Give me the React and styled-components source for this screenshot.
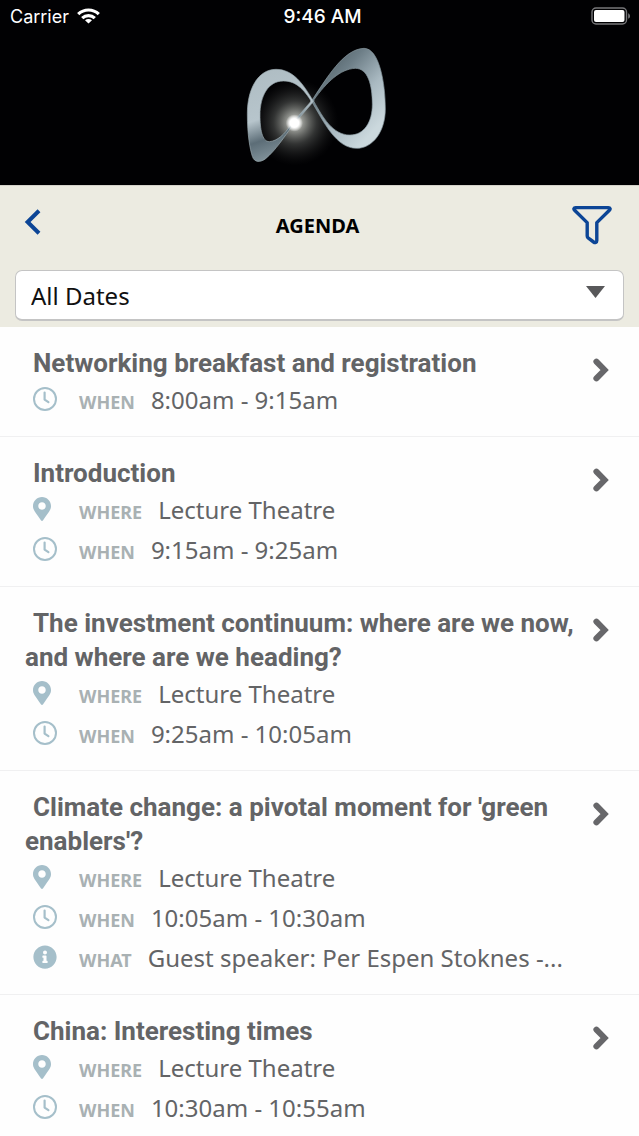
import React from 'react';
import styled, { createGlobalStyle } from 'styled-components';
import { FaMapMarkerAlt, FaInfoCircle } from 'react-icons/fa';

const GlobalStyle = createGlobalStyle`
  * {
    box-sizing: border-box;
  }
  body {
    margin: 0;
    background-color: #fefefe;
    font-family: 'Noto Sans', 'Open Sans', sans-serif;
    color: #636466;
  }
  ::-webkit-scrollbar {
    display: none;
  }
`
const Banner = styled.header`
  background-color: #010103;
`
const StatusBar = styled.div`
  display: grid;
  grid-template-columns: 1fr auto 1fr;
  align-items: center;
  height: 32px;
  padding: 0 8px 0 10px;
  font-family: Inter, sans-serif;
  font-size: 18px;
  color: #ffffff;
`
const Carrier = styled.div`
  display: flex;
  align-items: center;
  gap: 8px;
`
const Time = styled.div`
  padding-left: 4px;
  font-size: 19px;
  font-weight: 500;
`
const Battery = styled.svg`
  justify-self: end;
`
const LogoCont = styled.div`
  display: flex;
  justify-content: center;
  align-items: flex-end;
  height: 153px;
`
const Toolbar = styled.section`
  padding: 0 15px 6px;
  background-color: #ecebe1;
  border-top: 1px solid #d4d2ca;
`
const TitleBar = styled.div`
  display: grid;
  grid-template-columns: 1fr auto 1fr;
  align-items: center;
  height: 84px;
  padding: 0 12px 6px 8px;
`
const IconButton = styled.button`
  display: flex;
  justify-self: ${props => props.$right ? 'end' : 'start'};
  padding: ${props => props.$right ? '0' : '0 0 6px'};
  border: 0;
  background: none;
  color: #0c4596;
  cursor: pointer;
`
const PageTitle = styled.h1`
  margin: 0;
  font-size: 20px;
  font-weight: 700;
  color: #000000;
`
const SelectCont = styled.div`
  display: grid;
  align-items: center;
  > * {
    grid-area: 1 / 1;
  }
`
const Select = styled.select`
  appearance: none;
  width: 100%;
  height: 51px;
  padding: 0 48px 0 15px;
  border: 1px solid #c4c4c4;
  border-bottom-width: 2px;
  border-radius: 7px;
  background-color: #ffffff;
  font-family: inherit;
  font-size: 24px;
  color: #111111;
`
const Arrow = styled.svg`
  justify-self: end;
  margin: 0 19px 8px 0;
  pointer-events: none;
`
const List = styled.ul`
  margin: 0;
  padding: 0;
  list-style: none;
`
const Session = styled.a`
  display: flex;
  align-items: flex-start;
  justify-content: space-between;
  gap: 12px;
  padding: 19px 30px 16px 25px;
  border-bottom: 1px solid #f0f0f1;
  color: inherit;
  text-decoration: none;
`
const SessionInfo = styled.div`
  flex: 1;
  min-width: 0;
`
const SessionTitle = styled.h2`
  margin: 0;
  font-family: Roboto, sans-serif;
  font-size: 26px;
  font-weight: 700;
  line-height: 34px;
  text-indent: 8px;
`
const Chevron = styled.svg`
  flex: none;
  margin-top: 12px;
`
const Field = styled.div`
  display: flex;
  align-items: baseline;
  height: 40px;
  padding-left: 8px;
  line-height: 40px;
`
const FieldIcon = styled.span`
  display: flex;
  align-self: center;
  width: 46px;
  padding-bottom: 2px;
  color: #a5bfca;
`
const Pin = styled(FaMapMarkerAlt)`
  width: 18px;
  height: 24px;
`
const Label = styled.span`
  margin-right: 16px;
  font-size: 18px;
  font-weight: 700;
  color: #a9b1b3;
`
const Value = styled.span`
  flex: 1;
  min-width: 0;
  font-size: 24px;
  overflow: hidden;
  text-overflow: ellipsis;
  white-space: nowrap;
`

const sessions = [
  {
    title: 'Networking breakfast and registration',
    fields: [['when', '8:00am - 9:15am']]
  },
  {
    title: 'Introduction',
    fields: [['where', 'Lecture Theatre'], ['when', '9:15am - 9:25am']]
  },
  {
    title: 'The investment continuum: where are we now, and where are we heading?',
    fields: [['where', 'Lecture Theatre'], ['when', '9:25am - 10:05am']]
  },
  {
    title: "Climate change: a pivotal moment for 'green enablers'?",
    fields: [
      ['where', 'Lecture Theatre'],
      ['when', '10:05am - 10:30am'],
      ['what', 'Guest speaker: Per Espen Stoknes -...']
    ]
  },
  {
    title: 'China: Interesting times',
    fields: [['where', 'Lecture Theatre'], ['when', '10:30am - 10:55am']]
  }
]

const Clock = () => (
  <svg width="24" height="24" viewBox="0 0 24 24" fill="none" stroke="currentColor">
    <circle cx="12" cy="12" r="11" strokeWidth="2" />
    <path d="M11.6 5.5V12.6L15.4 15.2" strokeWidth="2.2" strokeLinecap="round" strokeLinejoin="round" />
  </svg>
)

const icons = {
  where: <Pin />,
  when: <Clock />,
  what: <FaInfoCircle size={24} />
}

const Logo = () => (
  <svg width="180" height="150" viewBox="0 0 540 450" role="img" aria-label="Infinity loop">
    <defs>
      <linearGradient id="left" x1="0" y1="0" x2="0.25" y2="1">
        <stop offset="0" stopColor="#aebcc2" />
        <stop offset="0.55" stopColor="#b7c5cc" />
        <stop offset="0.78" stopColor="#5c6d77" />
        <stop offset="1" stopColor="#82939b" />
      </linearGradient>
      <linearGradient id="right" x1="0.1" y1="0.1" x2="0.75" y2="0.9">
        <stop offset="0" stopColor="#4c5a61" />
        <stop offset="0.3" stopColor="#6d7e87" />
        <stop offset="0.65" stopColor="#a9b9c1" />
        <stop offset="1" stopColor="#cbd8dd" />
      </linearGradient>
      <radialGradient id="glow">
        <stop offset="0" stopColor="#fff" stopOpacity="0.95" />
        <stop offset="0.18" stopColor="#d5d8d0" stopOpacity="0.7" />
        <stop offset="0.5" stopColor="#8d918c" stopOpacity="0.35" />
        <stop offset="1" stopColor="#333" stopOpacity="0" />
      </radialGradient>
      <radialGradient id="spark">
        <stop offset="0.5" stopColor="#fff" />
        <stop offset="1" stopColor="#fff" stopOpacity="0" />
      </radialGradient>
    </defs>
    <circle cx="195" cy="262" r="130" fill="url(#glow)" />
    <path
      fill="url(#right)"
      stroke="#8b9ba3"
      strokeWidth="2"
      fillRule="evenodd"
      d="M243 200C290 130 340 42 402 40C448 40 466 145 466 222C466 290 428 340 380 340C318 340 282 262 243 196ZM252 200C278 246 308 300 360 300C402 300 427 262 427 208C427 150 414 100 376 100C330 102 290 142 252 194Z"
    />
    <path
      fill="url(#left)"
      stroke="#9caab0"
      strokeWidth="2"
      fillRule="evenodd"
      d="M249 197C218 144 188 103 138 103C84 103 52 162 52 236C52 300 60 342 67 364C73 383 91 383 107 371C138 345 162 306 186 274L250 200ZM242 196C214 152 190 138 160 138C114 138 90 184 90 240C90 282 96 320 118 320C142 318 164 298 182 270L242 200Z"
    />
    <circle cx="193" cy="264" r="26" fill="url(#spark)" />
  </svg>
)

export default ()=> {
  return(
    <>
      <GlobalStyle />
      <Banner>
        <StatusBar>
          <Carrier>
            Carrier
            <svg width="23" height="16" viewBox="0 0 23 16" fill="none" stroke="#fff" strokeWidth="3.2">
              <path d="M1.2 6.2C7 0.6 16 0.6 21.8 6.2" />
              <path d="M5.2 10.2C8.8 6.7 14.2 6.7 17.8 10.2" />
              <path d="M11.5 15.6L8 12.2C10 10.5 13 10.5 15 12.2Z" fill="#fff" stroke="none" />
            </svg>
          </Carrier>
          <Time>9:46 AM</Time>
          <Battery width="40" height="18" viewBox="0 0 40 18">
            <rect x="1" y="1" width="34.5" height="16" rx="4" fill="none" stroke="#77777a" strokeWidth="1.4" />
            <rect x="3" y="3" width="30.5" height="12" rx="2" fill="#fff" />
            <path d="M37.2 6.2C39.6 7.2 39.6 10.8 37.2 11.8Z" fill="#77777a" />
          </Battery>
        </StatusBar>
        <LogoCont>
          <Logo />
        </LogoCont>
      </Banner>
      <Toolbar>
        <TitleBar>
          <IconButton aria-label="Back">
            <svg width="20" height="26" viewBox="0 0 20 26" fill="none" stroke="currentColor" strokeWidth="4">
              <path d="M16 1.8L4.6 13L16 24.2" />
            </svg>
          </IconButton>
          <PageTitle>AGENDA</PageTitle>
          <IconButton $right aria-label="Filter">
            <svg width="40" height="40" viewBox="0 0 40 40" fill="none" stroke="currentColor" strokeWidth="3.4" strokeLinejoin="round">
              <path d="M3.6 2.6H36.4C38.2 2.6 38.6 4.2 37.4 5.3L24.8 17.6V35.4C24.8 37.6 23 38 21.6 37L16.4 33.2C15.6 32.6 15.2 32 15.2 31V17.6L2.6 5.3C1.4 4.2 1.8 2.6 3.6 2.6Z" />
            </svg>
          </IconButton>
        </TitleBar>
        <SelectCont>
          <Select aria-label="Dates" defaultValue="all">
            <option value="all">All Dates</option>
          </Select>
          <Arrow width="19" height="12" viewBox="0 0 19 12">
            <path d="M0 0H19L9.5 12Z" fill="#58585a" />
          </Arrow>
        </SelectCont>
      </Toolbar>
      <List>
        {sessions.map(session => (
          <li key={session.title}>
            <Session href="#">
              <SessionInfo>
                <SessionTitle>{session.title}</SessionTitle>
                {session.fields.map(([name, value]) => (
                  <Field key={name}>
                    <FieldIcon>{icons[name]}</FieldIcon>
                    <Label>{name.toUpperCase()}</Label>
                    <Value>{value}</Value>
                  </Field>
                ))}
              </SessionInfo>
              <Chevron width="16" height="26" viewBox="0 0 16 26" fill="none" stroke="#67676a" strokeWidth="6">
                <path d="M3.4 3.6L11.6 12L3.4 20.4" strokeLinecap="round" />
              </Chevron>
            </Session>
          </li>
        ))}
      </List>
    </>
  )
}
